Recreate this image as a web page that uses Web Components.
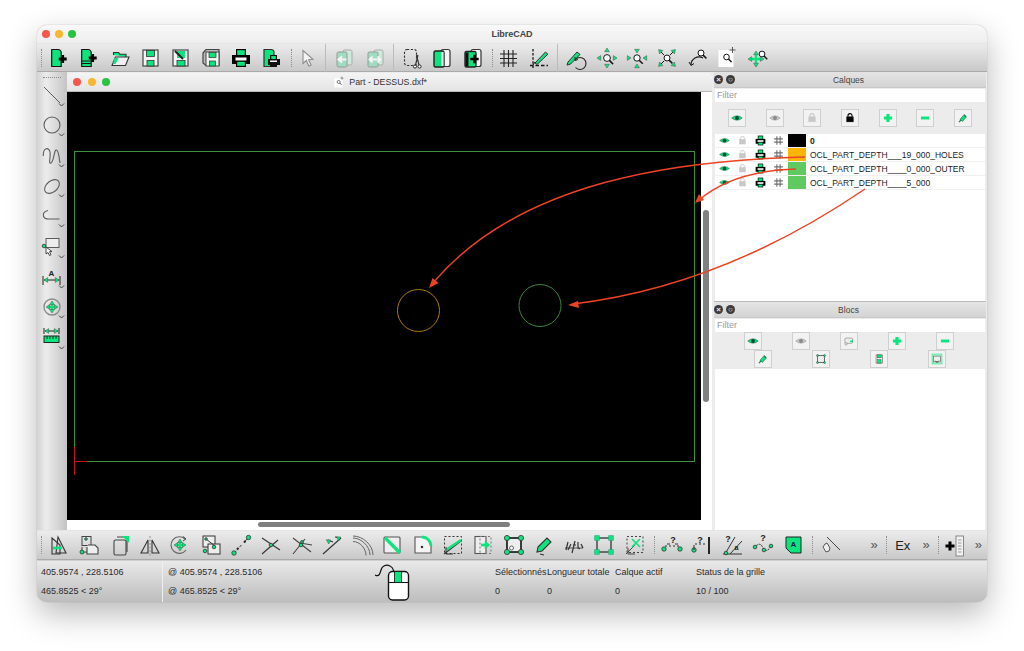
<!DOCTYPE html>
<html lang="fr"><head><meta charset="utf-8"><title>LibreCAD</title>
<style>
html,body{margin:0;padding:0;background:#fff;overflow:hidden}
body{width:1024px;height:651px;box-sizing:border-box;padding:25px 37px 49px;font-family:"Liberation Sans",Arial,sans-serif}
</style></head><body>
<mac-window>
  <tool-bar slot="top">
    <tool-handle></tool-handle>
    <tool-button icon="new"></tool-button><tool-button icon="newtpl"></tool-button><tool-button icon="open"></tool-button><tool-button icon="save"></tool-button><tool-button icon="saveas"></tool-button><tool-button icon="saveall"></tool-button><tool-button icon="print"></tool-button><tool-button icon="preview"></tool-button>
    <tool-handle ml="4.5" mr="0"></tool-handle>
    <tool-button icon="pointer"></tool-button>
    <tool-sep></tool-sep>
    <tool-button icon="tabprev"></tool-button><tool-button icon="tabnext"></tool-button>
    <tool-sep></tool-sep>
    <tool-button icon="cut"></tool-button><tool-button icon="copy"></tool-button><tool-button icon="paste"></tool-button>
    <tool-handle ml="4" mr="1"></tool-handle>
    <tool-button icon="grid"></tool-button><tool-button icon="draft"></tool-button>
    <tool-sep></tool-sep>
    <tool-button icon="redraw"></tool-button><tool-button icon="zoomin"></tool-button><tool-button icon="zoomout"></tool-button><tool-button icon="zoomauto"></tool-button><tool-button icon="zoomprev"></tool-button><tool-button icon="zoomwin"></tool-button><tool-button icon="zoompan"></tool-button>
  </tool-bar>

  <side-bar slot="left">
    <tool-button icon="l-line" col></tool-button><tool-button icon="l-circle" col></tool-button><tool-button icon="l-spline" col></tool-button><tool-button icon="l-ellipse" col></tool-button><tool-button icon="l-poly" col></tool-button><tool-button icon="l-select" col></tool-button><tool-button icon="l-dim" col></tool-button><tool-button icon="l-move" col></tool-button><tool-button icon="l-ruler" col></tool-button>
  </side-bar>

  <sub-window slot="mdi" title-text="Part - DESSUS.dxf*"><cad-canvas></cad-canvas></sub-window>

  <dock-panel slot="dock" heading="Calques" style="height:229px">
    <button-row>
      <square-button icon="eye"></square-button><square-button icon="eyeoff"></square-button><square-button icon="lockoff"></square-button><square-button icon="lock"></square-button><square-button icon="plus"></square-button><square-button icon="minus"></square-button><square-button icon="edit"></square-button>
    </button-row>
    <layer-list>
      <layer-row color="#000" bold>0</layer-row>
      <layer-row color="#ffb400">OCL_PART_DEPTH___19_000_HOLES</layer-row>
      <layer-row color="#5fca5f">OCL_PART_DEPTH____0_000_OUTER</layer-row>
      <layer-row color="#5fca5f">OCL_PART_DEPTH____5_000</layer-row>
    </layer-list>
  </dock-panel>
  <dock-panel slot="dock" heading="Blocs" style="flex:1">
    <block-rows>
      <square-button icon="eye"></square-button><square-button icon="eyeoff"></square-button><square-button icon="blockcam"></square-button><square-button icon="plus"></square-button><square-button icon="minus"></square-button>
      <square-button slot="second" icon="edit"></square-button><square-button slot="second" icon="blockrect"></square-button><square-button slot="second" icon="blocksave"></square-button><square-button slot="second" icon="blockins"></square-button>
    </block-rows>
    <layer-list></layer-list>
  </dock-panel>

  <tool-bar slot="bottom">
    <tool-handle></tool-handle>
    <tool-button icon="m-move"></tool-button><tool-button icon="m-rect"></tool-button><tool-button icon="m-page"></tool-button><tool-button icon="m-mirror"></tool-button><tool-button icon="m-rot"></tool-button><tool-button icon="m-2rect"></tool-button><tool-button icon="m-seg"></tool-button><tool-button icon="m-x"></tool-button><tool-button icon="m-xx"></tool-button><tool-button icon="m-arrow"></tool-button><tool-button icon="m-arcs"></tool-button><tool-button icon="m-bevel"></tool-button><tool-button icon="m-round"></tool-button><tool-button icon="m-angle"></tool-button><tool-button icon="m-stretch"></tool-button><tool-button icon="m-nodes"></tool-button><tool-button icon="m-pen"></tool-button><tool-button icon="m-text"></tool-button><tool-button icon="m-handles"></tool-button><tool-button icon="m-delete"></tool-button>
    <tool-handle ml="4.5" mr="1.5"></tool-handle>
    <tool-button icon="q-pts"></tool-button><tool-button icon="q-dist"></tool-button><tool-button icon="q-ang"></tool-button><tool-button icon="q-len"></tool-button><tool-button icon="q-a"></tool-button>
    <tool-handle ml="4" mr="1"></tool-handle>
    <tool-button icon="s-line"></tool-button><tool-more width="36"></tool-more>
    <tool-handle ml="5" mr="3"></tool-handle><tool-text>Ex</tool-text><tool-more width="17"></tool-more>
    <tool-handle ml="5" mr="1"></tool-handle><tool-button icon="s-plus"></tool-button><tool-more width="15"></tool-more>
  </tool-bar>

  <status-bar slot="status">
    <status-cell width="126" pad="4" divider><span>405.9574 , 228.5106</span><span>465.8525 &lt; 29°</span></status-cell>
    <status-cell width="212" pad="5"><span>@&nbsp;405.9574 , 228.5106</span><span>@&nbsp;465.8525 &lt; 29°</span></status-cell>
    <mouse-widget></mouse-widget>
    <status-cell width="52" pad="0" style="margin-left:86px"><span>Sélectionnés</span><span>0</span></status-cell>
    <status-cell width="68" pad="0"><span>Longueur totale</span><span>0</span></status-cell>
    <status-cell width="81" pad="0"><span>Calque actif</span><span>0</span></status-cell>
    <status-cell width="90" pad="0"><span>Status de la grille</span><span>10 / 100</span></status-cell>
  </status-bar>
</mac-window>

<script>
const G='#0ce57d', K='#161616', D='#5c5c5c', M='#8a8a8a';
const s=(d,w=1.3,c=K,f='none',x='')=>`<path d="${d}" fill="${f}" stroke="${c}" stroke-width="${w}" ${x} />`;
const fl=(d,c=G)=>`<path d="${d}" fill="${c}" />`;
const rc=(x,y,w,h,f='none',c=K,sw=1.2,x2='')=>`<rect x="${x}" y="${y}" width="${w}" height="${h}" fill="${f}" stroke="${c}" stroke-width="${sw}" ${x2} />`;
const ci=(x,y,r,f='none',c=K,sw=1.2)=>`<circle cx="${x}" cy="${y}" r="${r}" fill="${f}" stroke="${c}" stroke-width="${sw}" />`;
const mag=(x,y,r=3)=>ci(x,y,r,'#fff',K,1)+s(`M${x+r*.7} ${y+r*.7}l${r*1.1} ${r*1.1}`,1.5);
const tx=(x,y,t,z=7,c=K,w=700)=>`<text x="${x}" y="${y}" font-family="Liberation Sans" font-size="${z}" font-weight="${w}" fill="${c}" text-anchor="middle">${t}</text>`;
const chev=s('M20 20.5l2.5 2.5 2.5-2.5',1,'#444');
const plus=(x,y,l=4,w=2.6)=>s(`M${x} ${y-l}v${l*2}M${x-l} ${y}h${l*2}`,w,'#000');
const tri=(x,y,r)=>`<path d="M-2.4 1.700L0-2 2.400 1.700z" fill="${G}" stroke="#333" stroke-width=".4" transform="translate(${x} ${y}) rotate(${r})" />`;
const dot=(x,y,r=2)=>ci(x,y,r,G,'#333',.8);
const shift=(m,x)=>`<g transform="translate(${x} 0)">${m}</g>`;
const floppy=()=>rc(5,4,15,16,'#f4f4f4','#444',1.2)+rc(8.5,4.5,8,6,G,'#333',.8)+rc(9,14.5,7,5.5,G,'#333',.8);
const eye=(c,p)=>`<path d="M3 12Q12 4.500 21 12 12 19.500 3 12z" fill="${p}" stroke="${c}" stroke-width=".8" />`+ci(12,12,3.4,c,c,0);
const ICONS={
hash:s('M9 4v16M15 4v16M4 9h16M4 15h16',2,'#6e6e6e'),
new:shift(s('M6 3.5h6.5a3 3 0 0 1 3 3v14h-9.5z',1.2,K,G)+plus(17,13,4,2.8),-1.3),
newtpl:shift(s('M6 3.5h6.5a3 3 0 0 1 3 3v14h-9.5z',1.2,K,G)+s('M6 15h9M6 17.5h9',1,K)+plus(17,12,4,2.8),-1.3),
open:s('M5.5 9V6.5h5l1.5 1.7h6V11',1.1,'#333',G)+s('M4 19.5L7.5 11H21l-3.5 8.5z',1.1,'#333','#f0f0f0')+fl('M6.500 12h4l-3 6H5z'),
save:floppy(),
saveas:rc(5,4,15,16,'#f4f4f4','#444',1.2)+rc(9,14.5,8,5.5,G,'#333',.8)+fl('M9 5h8v7H9z')+s('M7 5l8 8',2,'#222'),
saveall:s('M4 7l3-3.5h13v16H7L4 17z',1.2,'#444','#bbb')+rc(7,6,13,14,'#f4f4f4','#444',1)+rc(10,6.5,7,5,G,'#333',.7)+rc(10.5,15,6,5,G,'#333',.7),
print:fl('M7 3h10v7H7z','#000')+fl('M8.2 4.2h7.6V10H8.2z')+fl('M3 9h18v9H3z','#000')+fl('M6.5 11.5h11v3h-11z','#fff')+fl('M7 15h10v6H7z','#000')+fl('M8.2 15.8h7.6v4H8.2z'),
preview:s('M5 3.5h7a3 3 0 0 1 3 3v14H5z',1.2,'#333',G)+fl('M11 9h7v4h3v6h-3v2h-7v-2H9v-6h2z','#111')+fl('M12.3 10h4.5v3h-4.5z')+fl('M11 14.5h7v1.5h-7z','#fff'),
pointer:s('M8 4.5v13l3.3-3 2.5 5.5 2.3-1-2.5-5.3 4.4-.4z',1.1,'#8d8d8d','#f3f3f3'),
tabprev:rc(11,4,9,15,'#cfe9dc','#aaa',1,'rx="1.5"')+rc(5,6,10,15,'#9fdcc0','#999',1,'rx="1.5"')+s('M6.500 13.500h8M10 10.500l-3.500 3 3.500 3',2,'#f5f5f5'),
tabnext:rc(11,4,9,15,'#cfe9dc','#aaa',1,'rx="1.5"')+rc(5,6,10,15,'#9fdcc0','#999',1,'rx="1.5"')+s('M6.500 13.500h11M14.500 10.500l3 3-3 3M9.500 10.500l-3 3 3 3',1.8,'#f5f5f5'),
cut:rc(4.5,3.5,12,16,'none','#333',1.1,'rx="2.5" stroke-dasharray="2.2 1.6"')+ci(15,20.5,1.6,'#fff','#222',1)+ci(19.5,20.5,1.6,'#fff','#222',1)+s('M15.5 19L18 9M19 19L16.5 9',1.1,'#333'),
copy:rc(11,3.5,9,17,'#f6f6f6','#333',1.2,'rx="2"')+rc(4,5,10,16,G,'#222',1.4,'rx="1.5"')+fl('M11.5 6h2v14h-2z','#eafff3'),
paste:rc(10,3.5,10,17,'#f6f6f6','#333',1.2,'rx="2"')+rc(4,5.5,11,15.5,G,'#222',1.4,'rx="1.5"')+fl('M4.5 6.5h3v14h-3z','#111')+plus(13.5,13,4.2,2.6),
grid:s('M3 8h17M3 12.5h17M3 17h17M7 4v17M11.5 4v17M16 4v17',1.1,'#222'),
draft:s('M6 3v20',1.3,K,'none','stroke-dasharray="2.5 1.6"')+s('M3 19.5h18',1.3,K,'none','stroke-dasharray="3.5 2"')+s('M8 17L18.5 6l2.4 2.2L10 18.5z',1,'#333',G)+s('M6 19l2-3',1),
redraw:s('M4 16L13 6l3 2.5-9.5 9.6-3.5 1z',1,'#333',G)+s('M11.5 13.5a6 6 0 1 1 0 8',1.1,'#222')+s('M11 11l0 3.5 3-1',1,'#222'),
zoomin:mag(12,12,3.4)+tri(12,4,0)+tri(12,20,180)+tri(4,12,-90)+tri(20,12,90),
zoomout:mag(12,12,3.2)+tri(12,5,180)+tri(12,20,0)+tri(4,12,90)+tri(20,12,-90),
zoomauto:mag(12,12,3)+s('M4 4l5 5M20 4l-5 5M4 20l5-5',1)+tri(5,5,-45)+tri(19,5,45)+tri(5,19,-135)+tri(19,19,135),
zoomprev:mag(15,7,3)+s('M5 19a8 8 0 0 1 12-7',1.1)+s('M3 16l2 3.5 3-2',1),
zoomwin:shift(fl('M4 4h15v17H4z','#fff')+mag(12,11,2.8)+s('M18 1v6M15 4h6',1,'#555'),-1.5),
zoompan:mag(16,8,2.9)+s('M10 9v8M6 13h8',2.4,G)+tri(10,7,0)+tri(10,19,180)+tri(4,13,-90)+tri(16,13,90),
'l-line':s('M5 4l16 16',1,D)+chev,
'l-circle':ci(13,12,8,'none',D,1.1)+chev,
'l-spline':s('M4.300 12C4 3 10 3 11 8S9 20 12 19 15 5 17.500 6 20 14 21 19',1.1,D)+chev,
'l-ellipse':`<ellipse cx="13" cy="12.5" rx="8.5" ry="5.5" transform="rotate(-40 13 12.5)" fill="none" stroke="${D}" stroke-width="1.1" />`+chev,
'l-poly':s('M9 6.500C5 7.500 4 10 4.500 12c.5 2 2 3 5 3h11',1.1,D)+chev,
'l-select':rc(7,3.5,13,9,'#eee',D,1)+dot(5,11,1.8)+s('M7 12l0 7 2-1.5 1.5 3 1.5-.8-1.5-3 2.5-.2z',.9,'#333','#fff')+chev,
'l-dim':s('M4 11v9M21 11v9M5 15h15',1,'#222')+tri(7,15,-90)+tri(18,15,90)+tx(12.5,11,'A',8,'#222')+chev,
'l-move':ci(13,12,8,'none',M,1.4)+s('M13 9v6M10 12h6',2,G)+tri(13,8,0)+tri(13,16,180)+tri(9,12,-90)+tri(17,12,90)+chev,
'l-ruler':s('M5 2v6M20 2v6M6 5h13',1,'#222')+tri(8,5,-90)+tri(17,5,90)+rc(5,10,15,6.5,G,'#222',1)+s('M8 10v3M11 10v3M14 10v3M17 10v3',.9,'#222')+chev,
'm-move':s('M5 5v16h8V12z',1.1,'#333')+s('M11 4l8 16H9z',1.1,'#333')+s('M6 15h9',2.6,G),
'm-rect':rc(5,3.5,9,9,'none','#444',1)+s('M5 14v5h5M11 12h7l3 3v6H10v-7',1.1,'#444','#eee')+dot(5,19)+dot(9,6,1.3),
'm-page':rc(6,7,12,15,'none','#444',1.1,'rx="1.5"')+s('M9 4h10v15',1.1,'#444')+fl('M14 3h7v7z'),
'm-mirror':s('M3 20L10 7v13zM21 20L14 7v13z',1.1,'#333')+s('M12 3v20',.9,M,'none','stroke-dasharray="2 1.5"'),
'm-rot':s('M18 17a8.3 8.3 0 1 1-1-11',1.2,'#666')+s('M15 3.5l3 2.5-3 2',1,'#444')+s('M12 9v6M9 12h6',2,G)+tri(12,8,0)+tri(12,16,180)+tri(8,12,-90)+tri(16,12,90),
'm-2rect':rc(4,3,12,11,'#eee','#333',1)+rc(9,11,12,10,'#eee','#333',1)+s('M7 6l9 7',1,'#333')+dot(7,6,1.3)+dot(6,18,1.8)+dot(15,14,1.8),
'm-seg':s('M5 20L19.500 4.500',1,'#333','none','stroke-dasharray="3 5"')+dot(5,20,2.2)+dot(19.5,4.5,2.2)+s('M9.500 15l-1.500 1.500M16.500 8l-1.500 1.500',2,'#222'),
'm-x':s('M3 5l18 12M3 21L19 7',1.1,'#333')+dot(12,12,1.8),
'm-xx':s('M3 5l18 14M3 21L15 6M10 10l12 2',1.1,'#444')+dot(11,12,1.8)+dot(12,9,1.4),
'm-arrow':s('M3 21L21 5',1.1,'#333')+s('M8 7l5 2M15 4l5 1',1.1,'#333')+tri(9,8,60)+tri(19,5,60),
'm-arcs':s('M3 5c8 0 17 8 17 17M3 8.500c7 0 13 7 13 14M3 3c10 0 20 9 20 19',1,'#666'),
'm-bevel':rc(4,4,16,16,'#eee','#555',1.1,'rx="1"')+fl('M6 3.5l15 15-2.500 2.500L4 6z'),
'm-round':s('M4 4h7a9 9 0 0 1 9 9v7H4z',1.1,'#555','#f4f4f4')+s('M11 4a9 9 0 0 1 9 9',2.8,G)+ci(11,14,.9,'#111','#111',.6),
'm-angle':rc(3.500,3.500,17,17,'none','#333',1,'stroke-dasharray="2 2"')+s('M3 21L20 8',1.1,'#333')+s('M5 17L20 7',2.4,G)+s('M5 14v7h7',1,'#333'),
'm-stretch':rc(4,3.500,11,17,'#eee','#555',1.1)+rc(9,3.500,11,17,'none','#777',1,'stroke-dasharray="2 2"')+s('M10 12h6',2.8,G)+s('M14 8l5 4-5 4z',.5,G,G),
'm-nodes':rc(5,5,14,14,'#eee','#111',1.6)+ci(9.500,15,2,'#fff','#555',.9)+dot(5,5,2.6)+dot(19,5,2.6)+dot(5,19,2.6)+dot(19,19,2.6),
'm-pen':s('M6 14L15 5l4 4-9 9-5 1z',1.1,'#333',G)+s('M8 21l4 1',1.2,'#333'),
'm-text':s('M3 15h18',.8,'#333')+s('M6 9l-2 8M9 11l-3 6M13 8l-3 12M16 9v6l2 1M19 11l2 4M11 12h3',1.2,'#333'),
'm-handles':rc(5,5,14,14,'none','#333',1.300)+[[5,5],[19,5],[5,19],[19,19]].map(p=>rc(p[0]-2.300,p[1]-2.300,4.600,4.600,G,'#2a8',.6)).join(''),
'm-delete':rc(4,3.500,16,16,'none','#444',1,'stroke-dasharray="2 2"')+s('M3 21l9-9M5 15v6h7',1,'#444')+s('M9 6l8 8M17 6l-8 8',1.600,G),
'q-pts':tx(13,9.500,'?',9,'#222')+s('M5 13h14',1,'#333','none','stroke-dasharray="2 2"')+dot(4,16,2.200)+dot(20,16,2.200)+s('M7 11h3M15 11h3',1,'#333'),
'q-dist':tx(10,10,'?',9,'#222')+s('M5 11h11',1,'#333','none','stroke-dasharray="2 2"')+s('M19 4v17',1.800,'#111')+dot(4,17,2.200)+s('M4 17v-5',1,'#333'),
'q-ang':tx(7,9,'?',9,'#222')+s('M2 21h19M4 21L14 4M9 21l12-13',1,'#333')+dot(5,20,1.800)+tx(15.500,17,'a',7,'#222'),
'q-len':tx(12,7.500,'?',9,'#222')+s('M3 15c4-5 7-5 9 0s6 2 9-3',1,'#333','none','stroke-dasharray="2 1"')+dot(4,14,1.800)+dot(13,17,1.800)+dot(20,13,1.800),
'q-a':s('M5 4h15v16H10L5 15z',1,'#222',G)+tx(12.500,14,'A',8,'#115'),
's-line':s('M9 4l13 13',1,'#444')+s('M7 11l-2 3 3 5 3-1 1-3-3-5z',1,'#555','#eee'),
's-plus':plus(7,13,4.500,3)+rc(13,3,7.500,20,'#f2f2f2','#888',1)+s('M15 7h3.500M15 10h3.500M15 13h3.500M15 16h3.500M15 19h3.500',1,'#999'),
eye:eye('#0d4a33',G),
eyeoff:eye('#8b8b8b','#c9c9c9'),
lockoff:s('M8.500 10V8a3.500 3.500 0 0 1 7 0v2',1.800,'#c8c8c8')+rc(6.500,10,11,8.500,'#c8c8c8','#c8c8c8',1),
lock:s('M8.500 10V8a3.500 3.500 0 0 1 7 0v2',1.800,'#000')+rc(6.500,10,11,8.500,'#000','#000',1),
plus:s('M12 5v14M5 12h14',5.500,G),
minus:s('M5 12h14',5,G),
edit:s('M7 14l7-8 4 4-7 8z',.8,'#333',G)+s('M5 19l4-4M14 7l3 3',2,'#1a7a50'),
blockcam:rc(5,7,13,9,'#eee','#777',1,'rx="2"')+ci(7,17,2,'#fff','#777',1)+fl('M14 11h5v3h-5z'),
blockrect:rc(6,6,12,12,'#eee','#333',1.200)+[[6,6],[18,6],[6,18],[18,18]].map(p=>dot(p[0],p[1],1.700)).join(''),
blocksave:rc(7,5,11,14,'#eee','#555',1)+rc(9,5,7,5,G,'#333',.6)+rc(9.500,13,6,6,G,'#333',.6),
blockins:rc(3.500,3.500,17,17,'#bff0d5',G,1)+rc(6,7,12,10,'#eee','#555',1)+s('M9 15l3 3 3-3',1.500,'#222'),
};
function tpl(css,html){const t=document.createElement('template');t.innerHTML=`<style>${css}</style>${html}`;return t}
function def(name,css,html,extra){
  const t=tpl(css,html);
  customElements.define(name,class extends HTMLElement{
    constructor(){super();this.attachShadow({mode:'open'}).appendChild(t.content.cloneNode(true))}
    connectedCallback(){extra&&extra(this,this.shadowRoot)}
  });
}
def('cad-icon',':host{display:block;line-height:0}svg{display:block;overflow:visible}','<svg viewBox="0 0 24 24"></svg>',(h,r)=>{
  const z=h.getAttribute('size')||24,v=r.querySelector('svg');v.setAttribute('width',z);v.setAttribute('height',z);v.innerHTML=ICONS[h.getAttribute('name')]||'';
});
def('traffic-lights',':host{display:flex;align-items:center;gap:var(--tl-gap,5px)}i{width:8px;height:8px;border-radius:50%}',
 '<i style="background:#f4574c"></i><i style="background:#f9b62e"></i><i style="background:#29c33f"></i>');
def('mac-window',`:host{display:grid;width:950px;height:577px;grid-template-columns:950px;grid-template-rows:18px 29px 458px 30px 42px;border-radius:10px;position:relative;box-shadow:0 0 1px rgba(0,0,0,.45),0 12px 32px rgba(0,0,0,.28);background:#ececec;color:#222}
 header{display:flex;align-items:center;padding-left:5px;background:linear-gradient(#f8f8f8,#eeeeee);border-radius:10px 10px 0 0;font:700 9px "Liberation Sans",Arial,sans-serif;color:#444}
 header b{flex:1;text-align:center;padding-right:39px;letter-spacing:-.05px}
 .mid{display:flex;min-height:0}
 .docks{width:272px;margin-left:2px;display:flex;flex-direction:column;gap:1px;background:#bbb}
 .status{border-radius:0 0 10px 10px;overflow:hidden}
 svg.notes{position:absolute;left:0;top:0;pointer-events:none}`,
 `<header><traffic-lights></traffic-lights><b>LibreCAD</b></header>
 <slot name="top"></slot>
 <div class="mid"><slot name="left"></slot><slot name="mdi"></slot><div class="docks"><slot name="dock"></slot></div></div>
 <slot name="bottom"></slot>
 <div class="status"><slot name="status"></slot></div>
 <svg class="notes" width="950" height="577" viewBox="37 25 950 577" fill="none" stroke="#ee4322" stroke-width="1.500">
  <path d="M805 157C680 160 520 180 433 283"/><path d="M429 288l3.500-10 6 5z" fill="#ee4322" stroke="none"/>
  <path d="M796 169C760 170 725 178 699 200"/><path d="M695 203l4-9 5 6z" fill="#ee4322" stroke="none"/>
  <path d="M865 189C790 240 690 290 573 304"/><path d="M568 305l10-4 1 7z" fill="#ee4322" stroke="none"/>
 </svg>`);
def('tool-bar',':host{display:flex;align-items:center;min-width:0;height:100%;background:linear-gradient(#ececec,#c9c9c9);border-bottom:1px solid #aaa;border-top:1px solid #e4e4e4;box-sizing:border-box;padding-left:2px;font:9px "Liberation Sans",Arial,sans-serif}','<slot></slot>');
def('side-bar',`:host{display:block;width:30px;box-sizing:border-box;padding-top:8px;background:linear-gradient(90deg,#d2d2d2,#ececec 30%,#c4c4c4);position:relative}
 .h{position:absolute;top:5px;left:6px;width:18px;border-top:1px dotted #888}
 slot{display:block}`,'<div class="h"></div><slot></slot>');
def('tool-handle',':host{display:block;flex:none;width:0;height:18px;border-left:1px dotted #8d8d8d}','',(h)=>{
  h.style.marginLeft=(h.getAttribute('ml')??2)+'px';h.style.marginRight=(h.getAttribute('mr')??2)+'px';
});
def('tool-sep',':host{display:block;flex:none;width:1px;height:28px;margin:0 3px;background:#bbb}','');
def('tool-button',':host{display:flex;flex:none;width:30.3px;height:28px;align-items:center;justify-content:center}:host([col]){height:30.300px;width:30px;justify-content:flex-start;padding-left:2px;box-sizing:border-box}','<cad-icon></cad-icon>',(h,r)=>{
  const c=r.querySelector('cad-icon');c.setAttribute('name',h.getAttribute('icon'));c.connectedCallback&&c.connectedCallback();
});
def('tool-more',':host{display:flex;flex:none;justify-content:flex-end;padding-right:3px;box-sizing:border-box;font:13px "Liberation Sans",Arial,sans-serif;color:#555;padding-bottom:2px}','<span>»</span>',(h)=>{h.style.width=(h.getAttribute('width')||24)+'px'});
def('tool-text',':host{display:block;flex:none;width:26px;text-align:center;font:13px "Liberation Sans",Arial,sans-serif;color:#222}','<slot></slot>');
def('sub-window',`:host{display:flex;flex-direction:column;width:645px;height:457px;margin-top:1px;background:#fff;border-radius:6px 6px 0 0;overflow:hidden}
 .t{display:flex;align-items:center;height:19px;flex:none;padding-left:6px;background:linear-gradient(#f4f4f4,#e4e4e4);border-bottom:1px solid #b9b9b9;box-sizing:border-box;font:8.800px "Liberation Sans",Arial,sans-serif;color:#333}
 .c{flex:1;display:flex;align-items:center;justify-content:center;gap:3px;padding-right:62px}
 .b{display:flex;height:428px;flex:none}
 .v{width:11px;padding:118px 2px 0 2px;box-sizing:border-box}
 .v i{display:block;width:6px;height:192px;border-radius:3px;background:#808080}
 .h{flex:1;padding:2px 0 0 191px;box-sizing:border-box}
 .h i{display:block;width:252px;height:5px;border-radius:3px;background:#808080}`,
 `<div class="t"><traffic-lights style="--tl-gap:6.700px"></traffic-lights><div class="c"><cad-icon name="zoomwin" size="13"></cad-icon><span id="n"></span></div></div>
 <div class="b"><slot></slot><div class="v"><i></i></div></div><div class="h"><i></i></div>`,
 (h,r)=>{r.getElementById('n').textContent=h.getAttribute('title-text')});
def('cad-canvas',':host{display:block;width:634px;height:428px;background:#000;position:relative}svg{position:absolute;left:0;top:0}',
 `<svg width="634" height="428" viewBox="67 92 634 428" fill="none">
  <rect x="74.500" y="151.500" width="620" height="310" stroke="#3f8f42" stroke-width="1"/>
  <path d="M74.500 447v28M74.500 461.500H87" stroke="#c01818" stroke-width="1"/>
  <circle cx="418.500" cy="310.500" r="21" stroke="#a97a10" stroke-width="1"/>
  <circle cx="540" cy="305.500" r="21" stroke="#38883a" stroke-width="1"/></svg>`);
def('dock-panel',`:host{display:flex;flex-direction:column;background:#ececec;min-height:0;font:9px "Liberation Sans",Arial,sans-serif;color:#444}
 .t{flex:none;height:16px;display:flex;align-items:center;background:linear-gradient(#e4e4e4,#d4d4d4);box-sizing:border-box;border-bottom:1px solid #c8c8c8}
 .btn{display:flex;gap:3px;padding-left:0}
 .btn i{width:9px;height:9px;border-radius:50%;background:#3b3b3b;display:flex;align-items:center;justify-content:center;color:#eee;font:700 8px/9px "Liberation Sans",Arial,sans-serif;font-style:normal}
 .ti{flex:1;text-align:center;font-size:8.500px;padding-right:24px}
 .f{flex:none;height:13px;margin:1px 1px 0 1px;background:#fff;font-size:9px;line-height:13px;color:#9a9a9a;padding-left:2px}
 .body{flex:1;display:flex;flex-direction:column;min-height:0}`,
 `<div class="t"><div class="btn"><i>×</i><i>○</i></div><div class="ti" id="h"></div></div><div class="f">Filter</div><div class="body"><slot></slot></div>`,
 (h,r)=>{r.getElementById('h').textContent=h.getAttribute('heading')});
def('button-row',':host{display:flex;flex:none;height:32px;align-items:center;padding-left:14px;gap:19.700px}','<slot></slot>');
def('block-rows',`:host{display:flex;flex-direction:column;flex:none;height:37px}
 .a,.b{display:flex;align-items:center;height:18px;gap:30px}.a{padding-left:30px}.b{padding-left:40px;gap:40px}`,
 '<div class="a"><slot></slot></div><div class="b"><slot name="second"></slot></div>');
def('square-button',':host{display:flex;flex:none;width:18px;height:18px;align-items:center;justify-content:center;box-sizing:border-box;border:1px solid #cfcfcf;background:#f2f2f2}','<cad-icon size="14"></cad-icon>',(h,r)=>{
  const c=r.querySelector('cad-icon');c.setAttribute('name',h.getAttribute('icon'));c.connectedCallback&&c.connectedCallback();
});
def('layer-list',':host{display:block;flex:1;margin:0 1px;background:#fff;min-height:0}','<slot></slot>');
def('layer-row',`:host{display:flex;align-items:center;height:14px;font:8.500px "Liberation Sans",Arial,sans-serif;color:#222;border-bottom:1px solid #f0f0f0;box-sizing:border-box}
 :host([bold]){font-weight:700}
 .i{flex:none;width:18.250px;display:flex;justify-content:center}
 .sw{flex:none;width:18px;height:13px}
 .n{margin-left:4px;white-space:nowrap}`,
 `<div class="i"><cad-icon name="eye" size="13"></cad-icon></div><div class="i"><cad-icon name="lockoff" size="13"></cad-icon></div><div class="i"><cad-icon name="print" size="13"></cad-icon></div><div class="i"><cad-icon name="hash" size="13"></cad-icon></div><div class="sw"></div><div class="n"><slot></slot></div>`,
 (h,r)=>{r.querySelector('.sw').style.background=h.getAttribute('color')});
def('status-bar',':host{display:flex;height:42px;background:linear-gradient(#e9e9e9,#bdbdbd);border-top:1px solid #d0d0d0;box-sizing:border-box;font:9px "Liberation Sans",Arial,sans-serif;color:#2a2a2a}','<slot></slot>');
def('status-cell',':host{display:grid;grid-template-rows:19px 19px;padding-top:1px;align-items:center;flex:none;box-sizing:border-box;white-space:nowrap}:host([divider]){border-right:1px solid #efefef}','<slot></slot>',(h)=>{
  h.style.width=h.getAttribute('width')+'px';h.style.paddingLeft=h.getAttribute('pad')+'px';
});
def('mouse-widget',':host{display:block;flex:none;width:34px;height:42px;padding-top:3px;box-sizing:border-box}svg{display:block}',
 `<svg width="36" height="38" viewBox="0 0 36 38" fill="none" stroke="#111" stroke-width="1.200">
  <path d="M0 11c4 2 5-1 6-5s5-6 9-4 3 4 4 6"/>
  <rect x="13.500" y="7.500" width="20" height="28.500" rx="4" fill="#fff" stroke-width="1.400"/>
  <path d="M13.500 18.500h20"/><rect x="19.500" y="7.500" width="7" height="11" fill="#0ce57d" stroke-width=".8"/></svg>`);
</script>
</body></html>
